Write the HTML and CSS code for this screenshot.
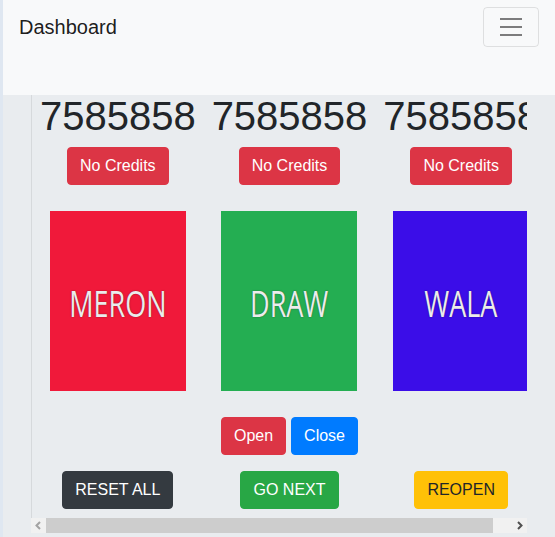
FILE: index.html
```html
<!DOCTYPE html>
<html lang="en">
<head>
<meta charset="utf-8">
<title>Dashboard</title>
<link rel="stylesheet" href="styles.css">
</head>
<body>
<div class="strip"></div>
<div class="page">
  <nav class="navbar">
    <a class="brand" href="#">Dashboard</a>
    <button class="toggler" type="button" aria-label="Toggle navigation">
      <svg width="30" height="30" viewBox="0 0 30 30"><path d="M4 7h22M4 15h22M4 23h22" stroke="rgba(0,0,0,0.5)" stroke-width="2" stroke-linecap="butt" fill="none"/></svg>
    </button>
  </nav>
  <main class="main">
    <div class="panel">
      <div class="viewport">
        <div class="board">
          <div class="cols top">
            <div class="col"><h1 class="num">7585858</h1><button class="btn red">No Credits</button></div>
            <div class="col"><h1 class="num">7585858</h1><button class="btn red">No Credits</button></div>
            <div class="col"><h1 class="num">7585858</h1><button class="btn red">No Credits</button></div>
          </div>
          <div class="cols cards">
            <div class="col"><div class="card meron"><span>MERON</span></div></div>
            <div class="col"><div class="card draw"><span>DRAW</span></div></div>
            <div class="col"><div class="card wala"><span>WALA</span></div></div>
          </div>
          <div class="pair">
            <button class="btn red">Open</button>
            <button class="btn blue">Close</button>
          </div>
          <div class="cols bottom">
            <div class="col"><button class="btn dark">RESET ALL</button></div>
            <div class="col"><button class="btn green">GO NEXT</button></div>
            <div class="col"><button class="btn yellow">REOPEN</button></div>
          </div>
        </div>
      </div>
      <div class="scrollbar">
        <div class="arrow"><svg width="15" height="15" viewBox="0 0 15 15"><path d="M9 4L5.5 7.5L9 11" stroke="#a3a3a3" stroke-width="2" fill="none"/></svg></div>
        <div class="thumb"></div>
        <div class="rest"></div>
        <div class="arrow"><svg width="15" height="15" viewBox="0 0 15 15"><path d="M6 4L9.5 7.5L6 11" stroke="#505050" stroke-width="2" fill="none"/></svg></div>
      </div>
    </div>
  </main>
</div>
</body>
</html>
```
FILE: styles.css
```css
* { box-sizing: border-box; }
html, body { margin: 0; padding: 0; }
body {
  display: flex;
  min-height: 537px;
  background: #e9ecef;
  font-family: "Liberation Sans", Arial, sans-serif;
  color: #212529;
  overflow: hidden;
}
.strip { width: 3px; flex: none; background: #dfe7f1; }
.page { flex: 1; min-width: 0; }
.navbar {
  height: 95px;
  background: #f8f9fa;
  display: flex;
  justify-content: space-between;
  align-items: flex-start;
  padding: 7px 16px 0 16px;
}
.brand {
  font-size: 20px;
  line-height: 30px;
  padding: 5px 0;
  color: rgba(0,0,0,0.9);
  text-decoration: none;
}
.toggler {
  width: 56px;
  height: 40px;
  padding: 4px 12px;
  border: 1px solid rgba(0,0,0,0.1);
  border-radius: 4px;
  background: transparent;
  display: flex;
  align-items: center;
  justify-content: center;
}
.toggler svg { display: block; }
.main { padding-left: 28px; }
.panel { width: 496px; }
.viewport {
  border-left: 1px solid #d6d9dc;
  overflow: hidden;
  padding-bottom: 9px;
}
.board { width: 515px; }
.cols { display: grid; grid-template-columns: repeat(3, 1fr); }
.col { display: flex; flex-direction: column; align-items: center; }
.num {
  margin: 0 0 10px;
  font-size: 40px;
  font-weight: 400;
  line-height: 42px;
  white-space: nowrap;
  color: #212529;
}
.btn {
  font-family: "Liberation Sans", Arial, sans-serif;
  font-size: 16px;
  line-height: 24px;
  padding: 6px 12px;
  border: 1px solid transparent;
  border-radius: 4px;
  color: #fff;
  cursor: pointer;
  white-space: nowrap;
}
.red { background: #dc3545; border-color: #dc3545; }
.blue { background: #007bff; border-color: #007bff; }
.dark { background: #343a40; border-color: #343a40; }
.green { background: #28a745; border-color: #28a745; }
.yellow { background: #ffc107; border-color: #ffc107; color: #212529; }
.cards { margin-top: 26px; }
.card {
  width: 136px;
  height: 180px;
  display: flex;
  align-items: center;
  justify-content: center;
  padding-top: 4px;
}
.card span {
  font-family: "Open Sans", "Noto Sans", sans-serif;
  font-size: 36px;
  color: #ececec;
  text-shadow: 0 0 1.5px rgba(0,0,0,0.55);
  transform: scaleX(0.75);
}
.meron { background: #f0193a; }
.draw { background: #24ae52; }
.wala { background: #3b0de8; }
.pair {
  margin-top: 26px;
  display: flex;
  justify-content: center;
  gap: 5px;
}
.bottom { margin-top: 16px; }
.scrollbar {
  display: flex;
  height: 15px;
  background: #f1f1f1;
}
.arrow { width: 15px; height: 15px; flex: none; }
.arrow svg { display: block; }
.thumb { width: 447px; flex: none; background: #cdcdcd; }
.rest { flex: 1; }
```
